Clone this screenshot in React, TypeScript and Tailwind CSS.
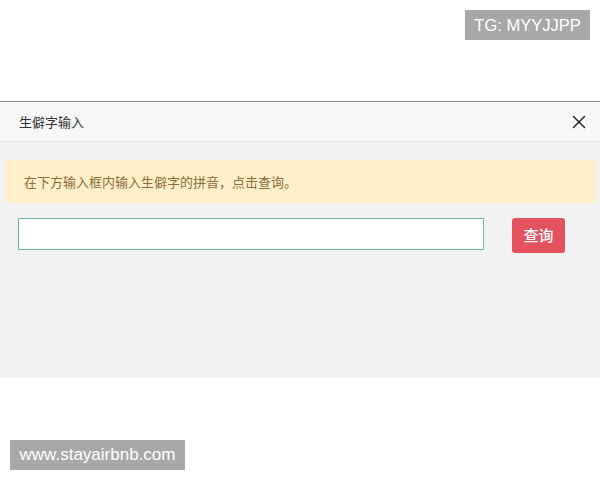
import { X } from 'lucide-react'

export default function App() {
  return (
    <div
      className="relative w-[600px] h-[480px] bg-white overflow-hidden"
      style={{ fontFamily: '"Noto Sans CJK SC", "Liberation Sans", sans-serif' }}
    >
      {/* dialog */}
      <div className="mt-[101px] border-t border-[#8c8c8c]">
        <div className="h-[40px] bg-[#f7f7f7] border-b border-[#ececec] flex items-center justify-between pl-[19px] pr-[10px]">
          <span className="text-[13px] text-[#333]">生僻字输入</span>
          <X className="w-[22px] h-[22px] text-[#222]" strokeWidth={1.5} />
        </div>
        <div className="bg-[#f2f2f2] h-[236px] pt-[18px] px-[5px]">
          <div className="h-[43px] bg-[#fdf0c8] flex items-center pl-[19px] text-[13px] text-[#8a6d3b] mr-[-1px]">
            在下方输入框内输入生僻字的拼音，点击查询。
          </div>
          <div className="flex items-start mt-[15px] pl-[13px]">
            <input
              className="w-[466px] h-[32px] bg-white border-[1.5px] border-[#66b5a5] outline-none px-2 text-[13px]"
              type="text"
            />
            <button className="ml-[28px] w-[53px] h-[35px] rounded-[3px] bg-[#e4525f] text-white text-[15px] font-medium">
              查询
            </button>
          </div>
        </div>
      </div>

      {/* watermarks */}
      <div
        className="absolute left-[465px] top-[10px] w-[125px] h-[30px] bg-[#a8a8a8] text-white text-[16.5px] flex items-center justify-center"
        style={{ fontFamily: '"Liberation Sans", sans-serif' }}
      >
        TG: MYYJJPP
      </div>
      <div
        className="absolute left-[10px] top-[440px] w-[175px] h-[30px] bg-[#a8a8a8] text-white text-[17px] flex items-center justify-center"
        style={{ fontFamily: '"Liberation Sans", sans-serif' }}
      >
        www.stayairbnb.com
      </div>
    </div>
  )
}
